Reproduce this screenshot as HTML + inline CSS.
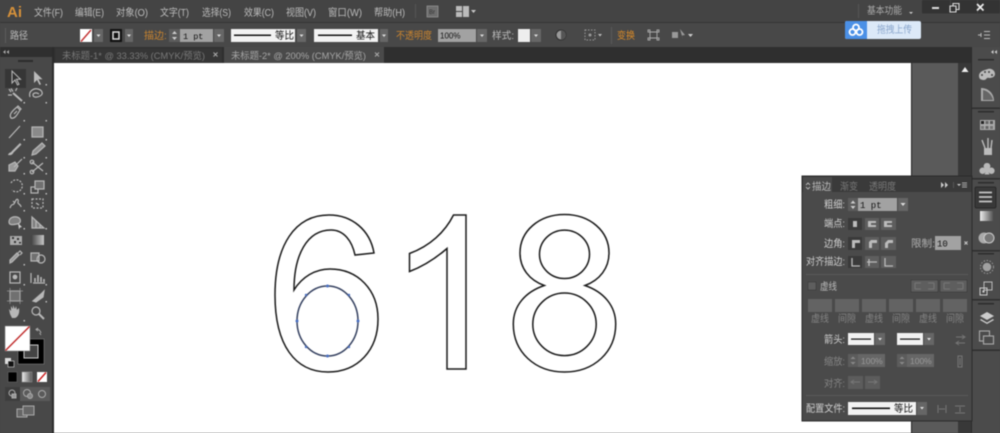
<!DOCTYPE html>
<html><head><meta charset="utf-8"><style>
html,body{margin:0;padding:0;background:#454545;width:1000px;height:433px;overflow:hidden}
svg{display:block;filter:blur(.5px)}
text{font-family:"Liberation Sans","Noto Sans CJK SC",sans-serif;font-size:10px;fill:#bcbcbc;white-space:pre}
.o{fill:#c9842f}.d{fill:#858585}.tb{fill:#787878}.k{fill:#111}
.ic{fill:none;stroke:#b8b8b8;stroke-width:1.2}
.dim{fill:none;stroke:#767676;stroke-width:1}
.dd{fill:#666}.f{fill:#a2a2a2}.w{fill:#f2f2f2}.b{fill:#5e5e5e;stroke:#3a3a3a;stroke-width:.6}
</style></head><body>
<svg width="1000" height="433" viewBox="0 0 1000 433" xmlns="http://www.w3.org/2000/svg">
<!-- bars -->
<rect width="1000" height="433" fill="#474747"/>
<rect width="1000" height="22" fill="#444"/>
<rect y="22" width="1000" height="1" fill="#353535"/>
<rect y="23" width="1000" height="24" fill="#484848"/>
<rect y="47" width="1000" height="16" fill="#2f2f2f"/>
<!-- canvas -->
<rect x="54" y="63" width="857" height="370" fill="#fff"/>
<rect x="52" y="47" width="2" height="386" fill="#2c2c2c"/>
<rect x="911" y="63" width="1.500" height="370" fill="#222"/>
<rect x="912" y="63" width="46" height="370" fill="#5a5a5a"/>
<rect x="958" y="63" width="13" height="370" fill="#383838"/>
<rect x="971" y="47" width="1" height="386" fill="#2b2b2b"/>
<rect x="972" y="47" width="28" height="386" fill="#4b4b4b"/>
<path d="M961.500 72l3.500-5 3.500 5z" fill="#eee"/>
<!-- menu -->
<text x="7" y="17" style="font-size:15px;font-weight:bold;fill:#d6913a">Ai</text>
<text x="34" y="16" textLength="29" lengthAdjust="spacingAndGlyphs">文件(F)</text>
<text x="75" y="16" textLength="29" lengthAdjust="spacingAndGlyphs">编辑(E)</text>
<text x="116" y="16" textLength="32" lengthAdjust="spacingAndGlyphs">对象(O)</text>
<text x="160" y="16" textLength="29" lengthAdjust="spacingAndGlyphs">文字(T)</text>
<text x="202" y="16" textLength="29" lengthAdjust="spacingAndGlyphs">选择(S)</text>
<text x="244" y="16" textLength="30" lengthAdjust="spacingAndGlyphs">效果(C)</text>
<text x="286" y="16" textLength="30" lengthAdjust="spacingAndGlyphs">视图(V)</text>
<text x="328" y="16" textLength="34" lengthAdjust="spacingAndGlyphs">窗口(W)</text>
<text x="374" y="16" textLength="31" lengthAdjust="spacingAndGlyphs">帮助(H)</text>
<rect x="415" y="4" width="1" height="14" fill="#555"/>
<rect x="427" y="6" width="11" height="11" fill="#6e6e6e" stroke="#999" stroke-width=".7"/>
<text x="429" y="14" style="font-size:6px;fill:#333">Br</text>
<g fill="#bbb"><rect x="456" y="6" width="6" height="5"/><rect x="456" y="12" width="6" height="5"/><rect x="463" y="6" width="6" height="11"/></g>
<path d="M471 10h5l-2.500 3z" fill="#c8c8c8"/>
<!-- right menu -->
<rect x="858" y="4" width="1" height="14" fill="#555"/>
<text x="867" y="14" textLength="35" lengthAdjust="spacingAndGlyphs" style="fill:#aaa">基本功能</text>
<path d="M909 12h4l-2 2z" fill="#ccc"/>
<rect x="922" y="0" width="78" height="13.500" rx="1" fill="#333"/>
<rect x="932" y="7" width="7" height="2" fill="#ddd"/>
<rect x="950" y="0" width="1" height="13" fill="#444"/><rect x="977" y="0" width="1" height="13" fill="#444"/>
<path d="M950 6h6v6h-6zM953 6V3.500h6v6h-3" fill="none" stroke="#ddd" stroke-width="1.100"/>
<path d="M977 4l6.500 6.500M983.500 4L977 10.500" stroke="#eee" stroke-width="1.700" fill="none"/>
<!-- tooltip -->
<rect x="845" y="21" width="76" height="18" rx="2" fill="#dce9f8"/>
<path d="M847 21h20v18h-20a2 2 0 0 1-2-2V23a2 2 0 0 1 2-2z" fill="#4b90e6"/>
<g fill="none" stroke="#fff" stroke-width="1.800"><circle cx="856" cy="27.500" r="3"/><circle cx="852.500" cy="32" r="3"/><circle cx="859.500" cy="32" r="3"/></g>
<text x="877" y="33" textLength="35" lengthAdjust="spacingAndGlyphs" style="fill:#8aa6cc">拖拽上传</text>
<!-- control bar -->
<rect x="5" y="28" width="1" height="15" fill="#5c5c5c"/>
<text x="10" y="39" textLength="18" lengthAdjust="spacingAndGlyphs">路径</text>
<rect x="80" y="29" width="12" height="13" fill="#fff"/><path d="M81 41.500L91 30" stroke="#c23030" stroke-width="1.400"/>
<rect x="94" y="29" width="9" height="13" class="dd"/><path d="M96.500 34.500h4l-2 2.500z" fill="#ddd"/>
<rect x="110" y="29" width="12" height="13" fill="#111"/><rect x="113" y="32" width="6" height="7" fill="none" stroke="#ddd" stroke-width="1.500"/>
<rect x="125" y="29" width="8" height="13" class="dd"/><path d="M127 34.500h4l-2 2.500z" fill="#ddd"/>
<text x="144" y="39" class="o" textLength="20" lengthAdjust="spacingAndGlyphs">描边</text><text x="164" y="39" class="o">:</text>
<rect x="169" y="29" width="11" height="13" fill="#5c5c5c"/><path d="M172 34l2.500-3 2.500 3zM172 37l2.500 3 2.500-3z" fill="#ccc"/>
<rect x="180" y="29" width="33" height="13" class="f"/><text x="183" y="39" class="k" style="font-size:8.500px;font-family:'Liberation Mono',monospace">1 pt</text>
<rect x="214" y="29" width="10" height="13" class="dd"/><path d="M217 34.500h4l-2 2.500z" fill="#ddd"/>
<rect x="231" y="29" width="64" height="13" class="w"/><rect x="234" y="34.500" width="37" height="1.500" fill="#111"/>
<text x="275" y="39" class="k" textLength="19" lengthAdjust="spacingAndGlyphs">等比</text>
<rect x="297" y="29" width="9" height="13" class="dd"/><path d="M299.500 34.500h4l-2 2.500z" fill="#ddd"/>
<rect x="314" y="29" width="64" height="13" class="w"/><rect x="318" y="34.500" width="34" height="1.500" fill="#111"/>
<text x="356" y="39" class="k" textLength="19" lengthAdjust="spacingAndGlyphs">基本</text>
<rect x="380" y="29" width="8" height="13" class="dd"/><path d="M382 34.500h4l-2 2.500z" fill="#ddd"/>
<text x="396" y="39" class="o" textLength="36" lengthAdjust="spacingAndGlyphs">不透明度</text>
<rect x="438" y="29" width="38" height="13" class="f"/><text x="440" y="38.500" class="k" style="font-size:8px">100%</text>
<rect x="477" y="29" width="10" height="13" class="dd"/><path d="M480 34.500h4l-2 2.500z" fill="#ddd"/>
<text x="492" y="39" textLength="22" lengthAdjust="spacingAndGlyphs">样式:</text>
<rect x="518" y="29" width="12" height="13" fill="#eee"/>
<rect x="531" y="29" width="10" height="13" class="dd"/><path d="M534 34.500h4l-2 2.500z" fill="#ddd"/>
<circle cx="561" cy="35" r="5" fill="#999" stroke="#2e2e2e" stroke-width="1"/><path d="M561 30a5 5 0 0 1 0 10z" fill="#555"/>
<rect x="585" y="30" width="10" height="10" fill="none" stroke="#999" stroke-dasharray="1.500 1.500"/>
<circle cx="590" cy="35" r="1.500" fill="#999"/><path d="M598 34h4l-2 2.500z" fill="#bbb"/>
<rect x="611" y="27" width="1" height="17" fill="#5a5a5a"/>
<text x="617" y="39" class="o" textLength="18" lengthAdjust="spacingAndGlyphs" style="fill:#d98a28">变换</text>
<path d="M650 32h7v6h-7zM648 30h2v2h-2zM657 30h2v2h-2zM648 38h2v2h-2zM657 38h2v2h-2z" fill="none" stroke="#aaa" stroke-width=".9"/>
<path d="M672 32h6v6h-6zM680 29l5 6-3 .5 1 4z" fill="#999"/><path d="M688 34h5l-2.500 3z" fill="#ccc"/>
<path d="M978 35h3M984 31.500h6M984 35h6M984 38.500h6M981 33v4" stroke="#bbb" stroke-width="1" fill="none"/>
<!-- tabs -->
<path d="M3 52l2.500-2v4zM6.500 52l2.500-2v4z" fill="#aaa"/>
<path d="M991 52l2.500-2v4zM994.500 52l2.500-2v4z" fill="#ccc"/>
<rect x="55" y="48" width="167" height="15" fill="#363636"/>
<rect x="224" y="47" width="160" height="16" fill="#4a4a4a"/>
<text x="62" y="59" class="tb" textLength="143" lengthAdjust="spacingAndGlyphs" style="font-size:9.500px">未标题-1* @ 33.33% (CMYK/预览)</text>
<text x="231" y="59" textLength="135" lengthAdjust="spacingAndGlyphs" style="font-size:9.500px;fill:#a6a6a6">未标题-2* @ 200% (CMYK/预览)</text>
<path d="M213.500 52.500l4 4M217.500 52.500l-4 4M375 52.500l4 4M379 52.500l-4 4" stroke="#aaa" stroke-width="1"/>
<!-- left toolbar -->
<rect x="0" y="57" width="52" height="376" fill="#484848"/>
<rect x="18" y="60" width="15" height="2" fill="#2c2c2c"/>
<rect x="5" y="69" width="21" height="19" fill="#363636"/>
<path d="M12 71v12l3-3 2.500 5 1.500-.7-2.500-5h4z" fill="#333" stroke="#bbb" stroke-width="1"/>
<path d="M34 71v12l3-3 2.500 5 1.500-.7-2.500-5h4z" fill="#bbb"/>
<g class="ic">
<path d="M9 89l2 3M17 88l-1.500 3M8 95h4M11 88.500l2 3"/><path d="M13 93l9 8" stroke-width="2"/>
<path d="M30 97c-2-6 4-9 8-8s6 5 2 7-7 1-7-1 3-3 6-1"/>
<path d="M11 118c-2-3 0-6 6-11l3 3c-4 7-6 9-9 8zM20 110l1-1-3-3-1 1M17 111l-3 3"/>
<path d="M9 138l11-12"/><rect x="32" y="127" width="11" height="10" fill="#8a8a8a"/>
<path d="M8 155c1-3 3-2 4-4l8-8 1.500 1.500-8 8c-1 2-2 3-5.500 2.500z" fill="#b8b8b8" stroke="none"/>
<path d="M32 155l1-4 9-8 3 3-9 8z" fill="#909090"/>
<path d="M9 165l6-3 3 4-3 5H9zM14 167l8-8" fill="#999"/>
<path d="M32 162l11 9M32 172l11-9"/><circle cx="32" cy="162" r="1.800"/><circle cx="32" cy="172" r="1.800"/>
<path d="M11 183a6 6 0 1 1 1 7" stroke-dasharray="2 1.300"/>
<rect x="31" y="187" width="7" height="6"/><rect x="35" y="181" width="9" height="8" fill="#707070"/>
<path d="M10 208c2-6 3-1 5-6s4-2 3 0 3 2 3 5M13 201l2 2"/>
<rect x="32" y="199" width="11" height="9" stroke-dasharray="2 1.500"/><path d="M36 203l3 2"/>
<path d="M9 222c0-4 4-6 8-5s5 6 0 7-8 1-8-2z" fill="#808080"/><path d="M18 223l4 4-2 .5-1 2z" fill="#ccc" stroke="none"/>
<path d="M32 217v11h12l-12-11zM36 221v7M40 224v4" fill="#808080"/>
<path d="M10 236h12v9H10z" fill="#aaa" stroke="none"/>
</g>
<g fill="#333"><rect x="12" y="237" width="2" height="2"/><rect x="17" y="238" width="2" height="2"/><rect x="14" y="241" width="2" height="2"/><rect x="19" y="242" width="2" height="1.500"/></g>
<defs><linearGradient id="g1"><stop offset="0" stop-color="#3f3f3f"/><stop offset="1" stop-color="#c8c8c8"/></linearGradient>
<linearGradient id="g2"><stop offset="0" stop-color="#eee"/><stop offset="1" stop-color="#555"/></linearGradient></defs>
<rect x="31" y="235" width="13" height="10" fill="url(#g1)"/>
<g class="ic">
<path d="M10 263l2-1 7-7-2-2-7 7z" fill="#999"/><path d="M18 253l2-2 2 2-2 2"/>
<rect x="31" y="253" width="8" height="8" fill="#707070"/><circle cx="41" cy="259" r="4"/>
<rect x="10" y="272" width="10" height="11"/><circle cx="15" cy="277" r="1.800" fill="#b8b8b8"/>
<path d="M31 283v-10M33 283h12"/><path d="M35 282v-4M38 282v-7M41 282v-5M44 282v-3" stroke-width="1.600"/>
<rect x="10" y="291" width="10" height="10" fill="#707070"/><path d="M7 291h16M7 301h16M10 288v16M20 288v16" stroke="#999" stroke-width=".7"/>
<path d="M33 301l8-7 3-3-1 6-7 5z" fill="#b8b8b8"/>
<path d="M10 314l-1-5 2 2v-5l2 3v-4l2 4 1-3 1 4 2-2c1 5-1 9-4 10h-3z" fill="#b8b8b8" stroke="none"/>
<circle cx="36" cy="311" r="4"/><path d="M39 314l5 5" stroke-width="2"/>
</g>
<g fill="#bbb"><rect x="45.500" y="84" width="1.500" height="1.500"/><rect x="23.500" y="102" width="1.500" height="1.500"/><rect x="45.500" y="102" width="1.500" height="1.500"/><rect x="23.500" y="120" width="1.500" height="1.500"/><rect x="45.500" y="120" width="1.500" height="1.500"/><rect x="23.500" y="139" width="1.500" height="1.500"/><rect x="45.500" y="139" width="1.500" height="1.500"/><rect x="23.500" y="157" width="1.500" height="1.500"/><rect x="45.500" y="157" width="1.500" height="1.500"/><rect x="23.500" y="173" width="1.500" height="1.500"/><rect x="45.500" y="173" width="1.500" height="1.500"/><rect x="23.500" y="193" width="1.500" height="1.500"/><rect x="45.500" y="193" width="1.500" height="1.500"/><rect x="23.500" y="210" width="1.500" height="1.500"/><rect x="45.500" y="210" width="1.500" height="1.500"/><rect x="23.500" y="228" width="1.500" height="1.500"/><rect x="45.500" y="228" width="1.500" height="1.500"/><rect x="23.500" y="264" width="1.500" height="1.500"/><rect x="23.500" y="284" width="1.500" height="1.500"/><rect x="45.500" y="284" width="1.500" height="1.500"/><rect x="45.500" y="301" width="1.500" height="1.500"/><rect x="23.500" y="320" width="1.500" height="1.500"/></g>
<!-- fill & stroke -->
<rect x="18" y="339" width="26" height="25" fill="#000" stroke="#aaa" stroke-width=".4"/>
<rect x="24" y="345" width="14" height="13" fill="#444" stroke="#ccc" stroke-width="1"/>
<rect x="5" y="326" width="25" height="25" fill="#fff" stroke="#777" stroke-width=".5"/>
<path d="M5.500 350.500L29.500 326.500" stroke="#c23030" stroke-width="1.500"/>
<path d="M36 329a5 5 0 0 1 5 4M38 328l-2 1.500 2 1.500M41 335l-1.500-2" fill="none" stroke="#aaa" stroke-width="1"/>
<rect x="5" y="358" width="6" height="6" fill="#ddd"/><rect x="8" y="361" width="6" height="6" fill="#111" stroke="#ddd" stroke-width=".6"/>
<rect x="8" y="372" width="9" height="10" fill="#000" stroke="#777" stroke-width=".5"/>
<rect x="22" y="372" width="10" height="10" fill="url(#g2)" stroke="#999" stroke-width=".5"/>
<rect x="37" y="372" width="10" height="10" fill="#fff"/><path d="M38 381.500l8-9" stroke="#c22" stroke-width="1.500"/>
<rect x="5" y="387" width="45" height="14" fill="#5a5a5a"/>
<rect x="5" y="387" width="15" height="14" fill="#3d3d3d"/>
<g fill="none" stroke="#aaa"><circle cx="12" cy="393" r="3"/><rect x="12" y="394" width="4" height="4" fill="#999"/><circle cx="27" cy="393" r="3.500"/><circle cx="30" cy="396" r="2.500" fill="#888"/><circle cx="42" cy="394" r="3.500"/></g>
<g fill="#666" stroke="#aaa"><rect x="17" y="409" width="10" height="8"/><rect x="23" y="406" width="11" height="9"/></g>
<!-- dock icons -->
<rect x="978" y="59" width="16" height="1.500" fill="#2c2c2c"/>
<path d="M979 76c0-5 6-6 9-7 4-1 7 2 7 5s-3 4-6 4c-3-1-2 2-5 2s-5-1-5-4z" fill="#bbb"/>
<g fill="#444"><circle cx="982" cy="75" r="1"/><circle cx="985" cy="72" r="1"/><circle cx="989" cy="72" r="1"/><circle cx="992" cy="75" r="1"/></g>
<path d="M981 88c7 0 13 5 13 13H981z" fill="#aaa"/><path d="M983 90c5 1 9 5 10 10h-10z" fill="#666"/>
<rect x="972" y="107.500" width="28" height="1.500" fill="#2e2e2e"/>
<rect x="978" y="111" width="16" height="1.500" fill="#2c2c2c"/>
<rect x="980" y="120" width="15" height="10" fill="#aaa"/><g fill="#222"><rect x="981" y="121" width="3" height="3"/><rect x="985.500" y="121" width="3" height="3" fill="#666"/><rect x="990" y="121" width="3" height="3" fill="#555"/><rect x="981" y="126" width="3" height="3" fill="#777"/><rect x="985.500" y="126" width="3" height="3" fill="#666"/><rect x="990" y="126" width="3" height="3" fill="#777"/></g>
<path d="M984 148h8v7h-8z" fill="#bbb"/><path d="M985 148l-3-8M988 148v-10M991 148l1-8" stroke="#bbb" stroke-width="1.400" fill="none"/>
<path d="M987 163a3.200 3.200 0 0 1 2.800 5 3.200 3.200 0 1 1-1.300 4l1 2.500h-5l1-2.500a3.200 3.200 0 1 1-1.300-4 3.200 3.200 0 0 1 2.800-5z" fill="#b8b8b8"/>
<rect x="972" y="178" width="28" height="1.500" fill="#2e2e2e"/>
<rect x="978" y="182" width="16" height="1.500" fill="#2c2c2c"/>
<rect x="975" y="187" width="21" height="21" rx="1.500" fill="#383838" stroke="#222" stroke-width=".7"/>
<path d="M979 192.500h13M979 197h13M979 201.500h13" stroke="#c4c4c4" stroke-width="1.800"/>
<rect x="980" y="211" width="13" height="10" fill="url(#g2)"/>
<circle cx="984" cy="238" r="5.500" fill="#aaa"/><circle cx="989" cy="238" r="5" fill="#777" stroke="#ccc" stroke-width="1"/>
<rect x="972" y="250" width="28" height="1.500" fill="#2e2e2e"/>
<rect x="978" y="253" width="16" height="1.500" fill="#2c2c2c"/>
<circle cx="987" cy="267" r="6.500" fill="none" stroke="#999" stroke-width="1" stroke-dasharray="1.500 1.500"/><circle cx="987" cy="267" r="4.300" fill="#a0a0a0"/>
<rect x="984" y="282" width="8" height="8" fill="none" stroke="#bbb"/><rect x="980" y="288" width="7" height="7" fill="none" stroke="#ccc"/><circle cx="983.500" cy="291.500" r="1.200" fill="#ccc"/>
<rect x="972" y="299" width="28" height="1.500" fill="#2e2e2e"/>
<rect x="978" y="303" width="16" height="1.500" fill="#2c2c2c"/>
<path d="M987 312l7 4-7 4-7-4z" fill="#ccc"/><path d="M981 319l6 3.500 6-3.500 1 1-7 4-7-4z" fill="#ccc"/>
<rect x="979.500" y="331" width="10" height="10" fill="none" stroke="#aaa" stroke-width="1.100"/><rect x="983.500" y="336" width="10" height="8" fill="#4b4b4b" stroke="#aaa" stroke-width="1.100"/>
<rect x="972" y="349.500" width="28" height="1.500" fill="#2e2e2e"/>
<!-- artwork -->
<g fill="none" stroke="#1a1a1a" stroke-width="1.500">
<path d="M374 253C370 230 352 215 329 215C295 215 275 245 275 295C275 345 295 372 328 372C358 372 378 350 378 319C378 290 358 269 330 269C315 269 302 277 294 290C294 255 307 230 331 230C344 230 352 241 355 255Z"/>
<path d="M453.500 215H466V369H447V248.500C436 258 424 266 409.500 271.500V253.500C430 246 445 232 453.500 215Z"/>
<path d="M564.500 214.500C590 214.500 609 231 609 253C609 268 600 280 585 285.500C604 292 615.700 306 615.700 324C615.700 352 594 372 564.500 372C535 372 513.300 352 513.300 324C513.300 306 525 292 544.300 285.500C529 280 520 268 520 253C520 231 539 214.500 564.500 214.500Z"/>
<ellipse cx="564.500" cy="254.300" rx="25" ry="24.200"/>
<ellipse cx="564.500" cy="324.300" rx="31.700" ry="31.300"/>
</g>
<ellipse cx="327.500" cy="321" rx="30.500" ry="35" fill="none" stroke="#34405f" stroke-width="1.500"/>
<g fill="#4a6fc0"><circle cx="327.500" cy="286" r="1.500"/><circle cx="327.500" cy="356" r="1.500"/><circle cx="297" cy="321" r="1.500"/><circle cx="358" cy="321" r="1.500"/><circle cx="306" cy="295" r="1.200"/><circle cx="349" cy="295" r="1.200"/><circle cx="306" cy="347" r="1.200"/><circle cx="349" cy="347" r="1.200"/></g>
<!-- stroke panel -->
<rect x="802" y="176" width="170" height="245" fill="#4a4a4a" stroke="#2b2b2b" stroke-width="1"/>
<rect x="802.500" y="176.500" width="169" height="15.500" fill="#3a3a3a"/>
<rect x="803" y="177" width="29" height="15" fill="#4a4a4a"/>
<path d="M806 185l2-2 2 2M806 187l2 2 2-2" stroke="#ccc" fill="none" stroke-width=".8"/>
<text x="812" y="190" textLength="19" lengthAdjust="spacingAndGlyphs">描边</text>
<text x="840" y="190" class="tb" textLength="18" lengthAdjust="spacingAndGlyphs">渐变</text>
<text x="869" y="190" class="tb" textLength="27" lengthAdjust="spacingAndGlyphs">透明度</text>
<path d="M941 182l3 3-3 3zM945 182l3 3-3 3z" fill="#ccc"/>
<rect x="953" y="182" width="1" height="6" fill="#555"/>
<path d="M957 184h4l-2 2z" fill="#ccc"/><path d="M962 183h5M962 185h5M962 187h5" stroke="#aaa" stroke-width=".9"/>
<!-- rows -->
<text x="824" y="208" textLength="21" lengthAdjust="spacingAndGlyphs" style="fill:#cfcfcf">粗细:</text>
<rect x="848" y="198" width="10" height="13" fill="#5c5c5c"/><path d="M850.500 203.500l2.500-3 2.500 3zM850.500 206l2.500 3 2.500-3z" fill="#ccc"/>
<rect x="858" y="198" width="39" height="13" class="f"/><text x="860" y="208" class="k" style="font-size:9px;font-family:'Liberation Mono',monospace">1 pt</text>
<rect x="898" y="198" width="10" height="13" class="dd"/><path d="M900.500 203h5l-2.500 3z" fill="#ddd"/>
<text x="824" y="227" textLength="21" lengthAdjust="spacingAndGlyphs" style="fill:#cfcfcf">端点:</text>
<rect x="848" y="218" width="14" height="12" fill="#3a3a3a"/><rect x="865" y="218" width="14" height="12" fill="#5e5e5e"/><rect x="881" y="218" width="15" height="12" fill="#5e5e5e"/>
<path d="M853 221h4v6h-4M868 221h8v2h-5v2h5v2h-8zM884 221h8v2h-5v2h5v2h-8z" fill="#bbb"/>
<text x="824" y="247" textLength="21" lengthAdjust="spacingAndGlyphs" style="fill:#cfcfcf">边角:</text>
<rect x="848" y="237" width="14" height="13" fill="#3a3a3a"/><rect x="865" y="237" width="14" height="13" fill="#5e5e5e"/><rect x="881" y="237" width="15" height="13" fill="#5e5e5e"/>
<path d="M852 248v-8h8v3h-5v5zM869 248v-6l2-2h6v3h-5v5zM885 248v-5l3-3h5v3h-4l-1 1v4z" fill="#bbb"/>
<text x="911" y="247" textLength="24" lengthAdjust="spacingAndGlyphs" style="fill:#b0b0b0">限制:</text>
<rect x="935" y="236" width="26" height="14" class="f"/><text x="937" y="246.500" class="k" style="font-size:9px;font-family:'Liberation Mono',monospace">10</text>
<path d="M964.500 241.500l3 3M967.500 241.500l-3 3" stroke="#ccc"/>
<text x="806" y="265" textLength="39" lengthAdjust="spacingAndGlyphs" style="fill:#cfcfcf">对齐描边:</text>
<rect x="848" y="256" width="14" height="12" fill="#3a3a3a"/><rect x="865" y="256" width="14" height="12" fill="#5e5e5e"/><rect x="881" y="256" width="15" height="12" fill="#5e5e5e"/>
<path d="M852 258v8h8M869 259v7M867 262h10M885 258v8h8" fill="none" stroke="#bbb" stroke-width="1.300"/>
<rect x="806" y="274" width="162" height="1" fill="#5a5a5a"/>
<rect x="808" y="282" width="8" height="8" fill="#5e5e5e" stroke="#3a3a3a" stroke-width=".6"/>
<text x="820" y="290" textLength="17" lengthAdjust="spacingAndGlyphs">虚线</text>
<rect x="911" y="280" width="27" height="12" class="b"/><rect x="940" y="280" width="27" height="12" class="b"/>
<path d="M915 283h6M928 283h6M915 289h6M928 289h6M915 283v6M934 283v6M944 283h6M957 283h6M944 289h6M957 289h6M944 283v6M963 283v6" class="dim"/>
<g fill="#636363"><rect x="808" y="299" width="24" height="13"/><rect x="835" y="299" width="24" height="13"/><rect x="862" y="299" width="24" height="13"/><rect x="889" y="299" width="24" height="13"/><rect x="916" y="299" width="24" height="13"/><rect x="943" y="299" width="24" height="13"/></g>
<text x="811" y="322" class="d" textLength="18" lengthAdjust="spacingAndGlyphs">虚线</text>
<text x="838" y="322" class="d" textLength="18" lengthAdjust="spacingAndGlyphs">间隙</text>
<text x="865" y="322" class="d" textLength="18" lengthAdjust="spacingAndGlyphs">虚线</text>
<text x="892" y="322" class="d" textLength="18" lengthAdjust="spacingAndGlyphs">间隙</text>
<text x="919" y="322" class="d" textLength="18" lengthAdjust="spacingAndGlyphs">虚线</text>
<text x="946" y="322" class="d" textLength="18" lengthAdjust="spacingAndGlyphs">间隙</text>
<text x="824" y="343" textLength="21" lengthAdjust="spacingAndGlyphs" style="fill:#cfcfcf">箭头:</text>
<rect x="848" y="333" width="26" height="12" class="w"/><rect x="851" y="338.500" width="20" height="1.200" fill="#111"/>
<rect x="875" y="333" width="10" height="12" class="dd"/><path d="M878 338h4l-2 2.500z" fill="#ddd"/>
<rect x="897" y="333" width="26" height="12" class="w"/><rect x="900" y="338.500" width="20" height="1.200" fill="#111"/>
<rect x="924" y="333" width="10" height="12" class="dd"/><path d="M927 338h4l-2 2.500z" fill="#ddd"/>
<path d="M956 337h9M956 343h9" class="dim"/><path d="M962 335l3 2-3 2M959 341l-3 2 3 2" class="dim"/>
<text x="824" y="365" class="d" textLength="21" lengthAdjust="spacingAndGlyphs">缩放:</text>
<rect x="848" y="354" width="10" height="13" fill="#5c5c5c"/><path d="M850.500 359l2.500-2.500 2.500 2.500zM850.500 362l2.500 2.500 2.500-2.500z" fill="#8a8a8a"/>
<rect x="858" y="354" width="27" height="13" fill="#666"/><text x="861" y="364" style="font-size:8.500px;fill:#999">100%</text>
<rect x="897" y="354" width="10" height="13" fill="#5c5c5c"/><path d="M899.500 359l2.500-2.500 2.500 2.500zM899.500 362l2.500 2.500 2.500-2.500z" fill="#8a8a8a"/>
<rect x="907" y="354" width="27" height="13" fill="#666"/><text x="910" y="364" style="font-size:8.500px;fill:#999">100%</text>
<path d="M958 356h4v11h-4zM960 358v7" class="dim"/>
<text x="824" y="387" class="d" textLength="21" lengthAdjust="spacingAndGlyphs">对齐:</text>
<rect x="848" y="376" width="15" height="13" fill="#5c5c5c"/><rect x="865" y="376" width="15" height="13" fill="#5c5c5c"/>
<path d="M851 382h9M854 380l-3 2 3 2M868 382h9M874 380l3 2-3 2" class="dim"/>
<rect x="806" y="395" width="162" height="1" fill="#5a5a5a"/>
<text x="806" y="412" textLength="39" lengthAdjust="spacingAndGlyphs" style="fill:#cfcfcf">配置文件:</text>
<rect x="848" y="402" width="68" height="13" class="w"/><rect x="852" y="407.500" width="38" height="1.600" fill="#111"/>
<text x="894" y="412" class="k" textLength="19" lengthAdjust="spacingAndGlyphs">等比</text>
<rect x="917" y="402" width="10" height="13" class="dd"/><path d="M920 407h4l-2 2.500z" fill="#ddd"/>
<path d="M938 405v8M946 405v8M939 409h6" class="dim"/><path d="M955 406h10M955 413h10M960 407v5" class="dim"/>
</svg>
</body></html>
